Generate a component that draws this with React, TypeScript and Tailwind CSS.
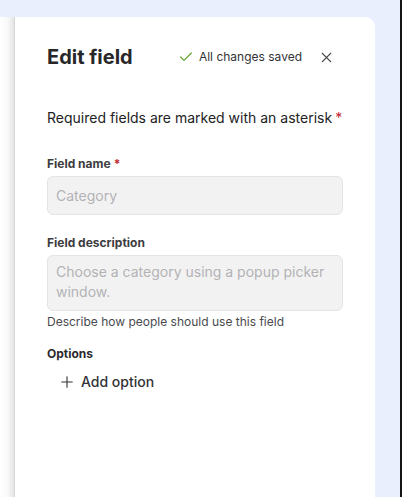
import { Check, X, Plus } from "lucide-react";

export default function App() {
  return (
    <div className="flex h-[497px] w-[402px] overflow-hidden bg-[#e9effd] font-['Inter',sans-serif] text-[#2b2b2e]">
      {/* left strip behind panel */}
      <div className="w-[15px] pt-[17px] flex">
        <div className="flex-1 bg-gradient-to-r from-white via-[#fafafa] to-[#e4e4e4] border-r border-[#d6d6d6]" />
      </div>

      <div className="mt-[17px] w-[360px] bg-white rounded-tr-[10px] px-8 pt-[26px]">
        {/* header */}
        <div className="flex items-center h-[28px]">
          <h1 className="text-[20px] font-bold leading-[28px] text-[#27272a]">Edit field</h1>
          <div className="ml-auto flex items-center">
            <Check size={16} strokeWidth={1.8} className="text-[#62a12e] mr-[5px]" />
            <span className="text-[12px] text-[#333336]">All changes saved</span>
            <button className="ml-[16px] mr-[8px] text-[#4a4a4d]">
              <X size={17} strokeWidth={1.5} />
            </button>
          </div>
        </div>

        <p className="mt-[36px] text-[14px] leading-[22px] text-[#222225]">
          Required fields are marked with an asterisk<span className="text-[#c0272d] ml-[3px]">*</span>
        </p>

        <div className="mt-[27px]">
          <label className="block text-[12px] font-bold leading-[16px] text-[#3c3c40] mb-1">
            Field name<span className="text-[#c0272d] ml-[3px]">*</span>
          </label>
          <div className="h-[39px] rounded-[6px] border border-[#e4e4e6] bg-[#f2f2f2] px-2 flex items-center text-[14px] text-[#b3b3b6]">
            Category
          </div>
        </div>

        <div className="mt-[20px]">
          <label className="block text-[12px] font-bold leading-[16px] text-[#3c3c40] mb-1">
            Field description
          </label>
          <div className="h-[56px] rounded-[6px] border border-[#e4e4e6] bg-[#f2f2f2] px-2 pt-[6px] text-[14px] leading-[20px] text-[#b3b3b6]">
            Choose a category using a popup picker window.
          </div>
          <p className="mt-[3px] text-[12px] leading-[16px] text-[#4a4a4e]">
            Describe how people should use this field
          </p>
        </div>

        <div className="mt-[16px]">
          <p className="text-[12px] font-bold leading-[16px] text-[#2b2b2e]">Options</p>
          <button className="mt-[10px] ml-[11px] flex items-center gap-[5px] text-[14px] font-medium leading-[20px] text-[#333336]">
            <Plus size={18} strokeWidth={1.5} />
            Add option
          </button>
        </div>
      </div>

      <div className="flex-1" />
      <div className="w-[2px] bg-[#141416]" />
    </div>
  );
}
